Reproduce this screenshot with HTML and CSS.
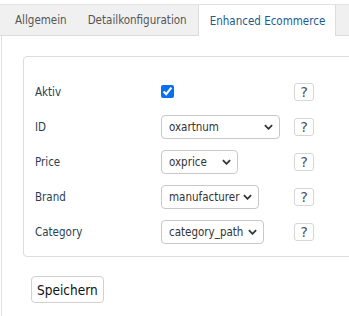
FILE: index.html
```html
<!DOCTYPE html>
<html lang="de">
<head>
  <meta charset="UTF-8" />
  <title>Enhanced Ecommerce</title>
  <link rel="stylesheet" href="styles.css">
</head>
<body>
  <div class="tabs">
    <span class="tab">Allgemein</span>
    <span class="tab">Detailkonfiguration</span>
    <span class="tab active">Enhanced Ecommerce</span>
  </div>

  <div class="content">
    <div class="box">
      <div class="row">
        <span class="label">Aktiv</span>
        <span class="field"><input type="checkbox" checked></span>
        <span class="help">?</span>
      </div>
      <div class="row">
        <span class="label">ID</span>
        <span class="field">
          <span class="sel sel-id"><select><option>oxartnum</option></select><svg viewBox="0 0 10 6"><path d="M1 1l4 4 4-4"/></svg></span>
        </span>
        <span class="help">?</span>
      </div>
      <div class="row">
        <span class="label">Price</span>
        <span class="field">
          <span class="sel sel-price"><select><option>oxprice</option></select><svg viewBox="0 0 10 6"><path d="M1 1l4 4 4-4"/></svg></span>
        </span>
        <span class="help">?</span>
      </div>
      <div class="row">
        <span class="label">Brand</span>
        <span class="field">
          <span class="sel sel-brand"><select><option>manufacturer</option></select><svg viewBox="0 0 10 6"><path d="M1 1l4 4 4-4"/></svg></span>
        </span>
        <span class="help">?</span>
      </div>
      <div class="row">
        <span class="label">Category</span>
        <span class="field">
          <span class="sel sel-cat"><select><option>category_path</option></select><svg viewBox="0 0 10 6"><path d="M1 1l4 4 4-4"/></svg></span>
        </span>
        <span class="help">?</span>
      </div>
    </div>

    <button class="save">Speichern</button>
  </div>
</body>
</html>
```

FILE: styles.css
```css
body {
  margin: 0;
  font-family: 'DejaVu Sans Condensed', 'DejaVu Sans', sans-serif;
  font-size: 11.5px;
  color: #2c3e50;
  background: #fff;
  overflow: hidden;
}
.tabs {
  display: flex;
  margin-top: 4px;
  padding-left: 4px;
  height: 30px;
  background: #f0f0f0;
  border-top: 1px solid #e2e2e2;
  border-bottom: 1px solid #dcdcdc;
}
.tab {
  display: flex;
  align-items: center;
  padding: 0 10px 0 11px;
  color: #555;
}
.tab.active {
  background: #fff;
  color: #1d5a8c;
  border-left: 1px solid #dcdcdc;
  border-right: 1px solid #dcdcdc;
  margin-bottom: -1px;
  margin-left: 1px;
}
.content {
  box-sizing: border-box;
  height: 280px;
  border-left: 1px solid #e0e0e0;
  margin-left: 1px;
  padding: 20px 0 0 21px;
  overflow: hidden;
}
.box {
  border: 1px solid #dcdcdc;
  border-radius: 4px;
  margin-right: -20px;
  padding: 17px 0 7px 11px;
}
.row {
  display: grid;
  grid-template-columns: 126px 133px 24px;
  align-items: center;
  height: 35px;
}
.field input {
  display: block;
  margin: 0;
  width: 13px;
  height: 13px;
  accent-color: #0b6ff2;
}
.sel {
  position: relative;
  display: block;
  width: max-content;
}
.sel select {
  display: block;
  appearance: none;
  font-family: inherit;
  font-size: 11.5px;
  color: #333;
  height: 24px;
  padding: 0 0 0 7px;
  border: 1px solid #c8c8c8;
  border-radius: 4px;
  background: #fff;
}
.sel svg {
  position: absolute;
  right: 7px;
  top: 9px;
  width: 9px;
  height: 6px;
  fill: none;
  stroke: #333;
  stroke-width: 2;
  pointer-events: none;
}
.sel-id select { width: 119px; }
.sel-price select { width: 77px; }
.sel-brand select { width: 98px; }
.sel-cat select { width: 103px; }
.help {
  box-sizing: border-box;
  width: 20px;
  height: 18px;
  border: 1px solid #d6d6d6;
  border-radius: 3px;
  display: flex;
  align-items: center;
  justify-content: center;
  font-family: 'DejaVu Sans', sans-serif;
  font-size: 14.5px;
  color: #4a5562;
}
.save {
  display: block;
  margin-top: 19px;
  margin-left: 8px;
  font-family: 'DejaVu Sans Condensed', 'DejaVu Sans', sans-serif;
  font-size: 13.5px;
  color: #111;
  background: #fff;
  border: 1px solid #d0d0d0;
  border-radius: 4px;
  height: 27px;
  padding: 0 5px;
}
```
